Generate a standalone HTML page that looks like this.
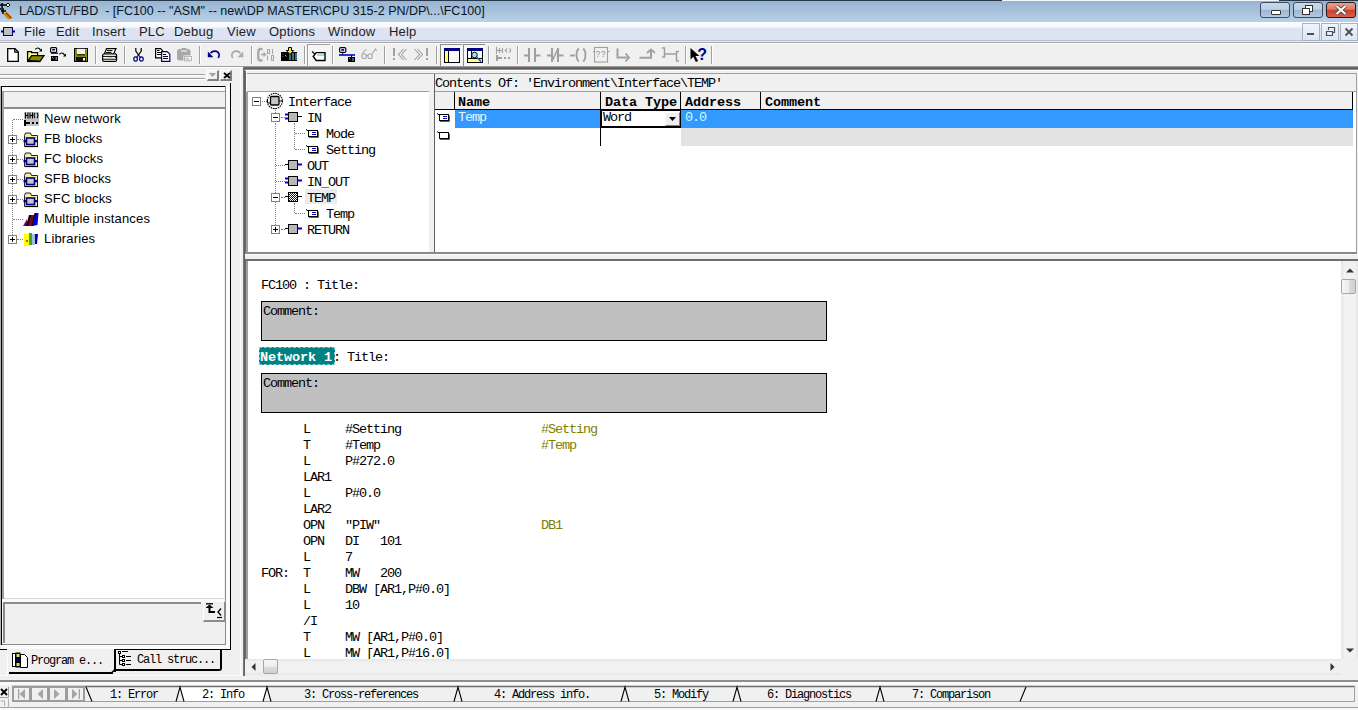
<!DOCTYPE html>
<html><head><meta charset="utf-8">
<style>
*{margin:0;padding:0;box-sizing:border-box}
html,body{width:1358px;height:710px;overflow:hidden;background:#f0f0f0;font-family:"Liberation Sans",sans-serif;font-size:12px;color:#000;position:relative}
.a{position:absolute}
svg{position:absolute;overflow:visible}
.m{margin-top:2px;font-family:"Liberation Mono",monospace;font-size:13.5px;letter-spacing:-1.1px;white-space:pre;line-height:16px;position:absolute}
.mb{margin-top:2px;font-family:"Liberation Mono",monospace;font-size:13.5px;letter-spacing:-0.1px;font-weight:bold;white-space:pre;line-height:16px;position:absolute}
.t{white-space:pre;position:absolute}
.mn{position:absolute;top:24px;font-size:13px;letter-spacing:0.2px;white-space:pre;color:#1e1e1e}
.sep{position:absolute;top:46px;width:2px;height:18px;border-left:1px solid #a0a0a0;border-right:1px solid #fff}
.tb{position:absolute;width:30px;height:16px;border:1px solid #3c4d63;border-radius:3px}
.mdib{position:absolute;top:23px;width:18px;height:18px;border:1px solid #a9b3c4;background:linear-gradient(#f0f4fa,#dde6f3)}
.pl{position:absolute;left:8px;width:9px;height:9px;border:1px solid #808080;background:#fff}
.pl::before{content:"";position:absolute;left:1px;top:3px;width:5px;height:1px;background:#000}
.pl::after{content:"";position:absolute;left:3px;top:1px;width:1px;height:5px;background:#000}
.mi{position:absolute;width:9px;height:9px;border:1px solid #808080;background:#fff}
.mi::before{content:"";position:absolute;left:1px;top:3px;width:5px;height:1px;background:#000}
.pi{position:absolute;width:9px;height:9px;border:1px solid #808080;background:#fff}
.pi::before{content:"";position:absolute;left:1px;top:3px;width:5px;height:1px;background:#000}
.pi::after{content:"";position:absolute;left:3px;top:1px;width:1px;height:5px;background:#000}
.tr{position:absolute;left:44px;font-size:13px;letter-spacing:0.15px;white-space:pre;color:#000}
.nb{position:absolute;top:686px;width:18px;height:16px;border:1px solid;border-color:#fff #808080 #808080 #fff;background:#f0f0f0}
.st{position:absolute;top:687px;font-family:"Liberation Mono",monospace;font-size:12px;letter-spacing:-1.2px;line-height:16px;white-space:pre}
</style></head><body>
<!-- title bar -->
<div class="a" style="left:0;top:0;width:1358px;height:22px;background:linear-gradient(#97b2cf,#b8d1e9)"></div>
<div class="a" style="left:0;top:0;width:1358px;height:1px;background:#27374a"></div><div class="a" style="left:1002px;top:0;width:277px;height:1px;background:#f4f6f8"></div>
<svg style="left:0;top:2px" width="14" height="17" viewBox="0 0 14 17">
 <path d="M0 3h8M2 1v5M0 7h4M1 9h5M3 8v4" stroke="#000" stroke-width="1.5"/>
 <path d="M8 1l2 2-2 2-2-2z" fill="#fff" stroke="#000" stroke-width="1"/>
 <path d="M5 11l6 6M6 10l6 6M4 12l5 5" stroke="#d08000" stroke-width="1.4"/>
 <path d="M6 11l5 5" stroke="#900" stroke-width="1"/>
</svg>
<div class="t" style="left:19px;top:4px;font-size:12.5px;color:#0a1420">LAD/STL/FBD  - [FC100 -- "ASM" -- new\DP MASTER\CPU 315-2 PN/DP\...\FC100]</div>
<!-- title buttons -->
<div class="tb" style="left:1260px;top:2px;background:linear-gradient(#c9d9ec 0,#bdd0e6 45%,#9fb6d2 50%,#b4c9e2 100%)"></div>
<div class="a" style="left:1271px;top:10px;width:10px;height:5px;background:#fff;border:1px solid #333;border-radius:1px"></div>
<div class="tb" style="left:1293px;top:2px;background:linear-gradient(#c9d9ec 0,#bdd0e6 45%,#9fb6d2 50%,#b4c9e2 100%)"></div>
<div class="a" style="left:1305px;top:5px;width:8px;height:7px;background:#fff;border:1px solid #333"></div>
<div class="a" style="left:1302px;top:8px;width:8px;height:7px;background:#fff;border:1px solid #333"></div>
<div class="tb" style="left:1326px;top:2px;border-color:#2a1a1a;background:linear-gradient(#e8a090 0,#de7a66 45%,#c9402a 50%,#d86048 100%)"></div>
<svg style="left:1335px;top:5px" width="12" height="10" viewBox="0 0 12 10"><path d="M1.5 1l9 8M10.5 1l-9 8" stroke="#333" stroke-width="3.6"/><path d="M1.5 1l9 8M10.5 1l-9 8" stroke="#fff" stroke-width="2.2"/></svg>

<!-- menu bar -->
<div class="a" style="left:0;top:22px;width:1358px;height:20px;background:linear-gradient(#fdfdfe 0,#f7f8fc 25%,#dfe4f3 32%,#dce2f2 100%)"></div>
<div class="a" style="left:0;top:40px;width:1358px;height:1px;background:#babfcc"></div><div class="a" style="left:0;top:41px;width:1358px;height:1px;background:#e9edf5"></div><div class="a" style="left:0;top:42px;width:1358px;height:1px;background:#a2a3a8"></div>
<div class="a" style="left:0;top:43px;width:1358px;height:1px;background:#ffffff"></div>
<svg style="left:1px;top:27px" width="14" height="9" viewBox="0 0 14 9"><rect x="2.5" y="0.5" width="9" height="8" fill="#bfbfbf" stroke="#000080"/><path d="M0 4.5h2.5M11.5 4.5H14" stroke="#000080" stroke-width="2"/></svg>
<div class="mn" style="left:24px">File</div>
<div class="mn" style="left:56px">Edit</div>
<div class="mn" style="left:92px">Insert</div>
<div class="mn" style="left:139px">PLC</div>
<div class="mn" style="left:174px">Debug</div>
<div class="mn" style="left:227px">View</div>
<div class="mn" style="left:269px">Options</div>
<div class="mn" style="left:328px">Window</div>
<div class="mn" style="left:389px">Help</div>
<div class="mdib" style="left:1302px"></div>
<div class="a" style="left:1307px;top:33px;width:7px;height:2px;background:#4a4f58"></div>
<div class="mdib" style="left:1321px"></div>
<svg style="left:1326px;top:27px" width="9" height="9" viewBox="0 0 9 9"><path d="M0.5 4.5h6v4h-6zM2.5 3V0.5h6v5H7" fill="none" stroke="#4a4f58" stroke-width="1.2"/></svg>
<div class="mdib" style="left:1340px"></div>
<svg style="left:1345px;top:28px" width="8" height="8" viewBox="0 0 8 8"><path d="M0.5 0.5l7 7M7.5 0.5l-7 7" stroke="#4a4f58" stroke-width="1.8"/></svg>
<!-- toolbar -->
<svg style="left:7px;top:48px" width="12" height="14" viewBox="0 0 12 14"><path d="M0.7 0.7h7.3l3.3 3.3v9.3h-10.6z" fill="#fff" stroke="#000" stroke-width="1.3"/><path d="M7.8 0.8v3.4h3.4" fill="none" stroke="#000" stroke-width="1.2"/></svg>
<svg style="left:24px;top:44px" width="22" height="20" viewBox="0 0 22 20"><path d="M3.6 17.4V7.6h4v1h6v3" fill="#ffff80" stroke="#000" stroke-width="1.3"/><path d="M4.2 16.5l3.5-4.8h12.2l-4 5.8z" fill="#8a8a00" stroke="#000" stroke-width="1.3"/><path d="M3 17.4h12" stroke="#000" stroke-width="1.4"/><path d="M11.3 5.3c1.5-1.8 3.6-1.8 5.2 0.6" fill="none" stroke="#000" stroke-width="1.2"/><path d="M15 7.4h3v-3z" fill="#000"/></svg>
<svg style="left:48px;top:44px" width="22" height="20" viewBox="0 0 22 20"><rect x="2.6" y="3.6" width="6" height="4.8" rx="1" fill="#fff" stroke="#000" stroke-width="1.2"/><rect x="4" y="5" width="3.2" height="1.6" rx="0.6" fill="#000080"/><path d="M3 9.2h7" stroke="#000" stroke-width="1.2"/><rect x="3" y="12" width="7" height="5" fill="#000"/><path d="M4.2 13.2l1.4 1.4M8.2 13v3" stroke="#70d0e0" stroke-width="1"/><path d="M11.3 10.3c1.5-1.8 3.6-1.8 5.2 0.6" fill="none" stroke="#000" stroke-width="1.2"/><path d="M15 12.4h3v-3z" fill="#000"/></svg>
<svg style="left:74px;top:48px" width="14" height="14" viewBox="0 0 14 14"><rect x="0" y="0" width="14" height="14" rx="0.5" fill="#000"/><rect x="1" y="1" width="12" height="12" fill="#8a8a10"/><rect x="3" y="0.8" width="8" height="5.4" fill="#f0f0f0"/><path d="M3 6.8h8" stroke="#000" stroke-width="1"/><rect x="2" y="9" width="10" height="4.2" fill="#101010"/><rect x="9" y="10" width="2" height="2.5" fill="#fff"/><rect x="12.2" y="1" width="0.8" height="0.8" fill="#fff"/></svg>
<div class="sep" style="left:95px"></div>
<svg style="left:102px;top:48px" width="16" height="14" viewBox="0 0 16 14"><path d="M4.6 0.6h9.4l-2.6 5.6h-9.2z" fill="#fff" stroke="#000" stroke-width="1.2"/><path d="M5 2.6h5.5M4 4.4h5.5" stroke="#000" stroke-width="1"/><rect x="0.6" y="6" width="14" height="7.4" rx="1.5" fill="#fff" stroke="#000" stroke-width="1.2"/><path d="M0.8 8.4h14M1 11.2h13.6" stroke="#000" stroke-width="1"/><path d="M5.5 9.8h5" stroke="#c8e040" stroke-width="1.2"/><path d="M13 5l2 2-2 2 2 2" fill="none" stroke="#000" stroke-width="0.8"/></svg>
<div class="sep" style="left:124px"></div>
<svg style="left:133px;top:48px" width="11" height="14" viewBox="0 0 11 14"><path d="M2.8 0v3l2.7 4M8.2 0v3l-2.7 4" fill="none" stroke="#000" stroke-width="1.2"/><path d="M5.5 7l-2 2.5M5.5 7l2 2.5" stroke="#000080" stroke-width="1.2"/><ellipse cx="2.6" cy="11" rx="1.8" ry="2.2" fill="none" stroke="#000080" stroke-width="1.2"/><ellipse cx="8.4" cy="11" rx="1.8" ry="2.2" fill="none" stroke="#000080" stroke-width="1.2"/></svg>
<svg style="left:155px;top:48px" width="16" height="14" viewBox="0 0 16 14"><path d="M0.6 0.6h5l1.8 1.8v7.4h-6.8z" fill="#fff" stroke="#000" stroke-width="1.2"/><path d="M2 2.5h2.5M2 4.5h4M2 6.5h4" stroke="#000" stroke-width="1"/><path d="M6.6 3.6h5.6l2.6 2.6v7.2h-8.2z" fill="#fff" stroke="#000080" stroke-width="1.2"/><path d="M8 6.5h3M8 8.5h5M8 10.5h5" stroke="#000" stroke-width="1"/></svg>
<svg style="left:177px;top:48px" width="16" height="14" viewBox="0 0 16 14"><rect x="0" y="1" width="13.5" height="11.5" rx="2.5" fill="#a8a8a8"/><rect x="4.5" y="0" width="5" height="2" fill="#a8a8a8"/><path d="M4 3h6" stroke="#fff" stroke-width="1"/><rect x="6.5" y="7.5" width="9" height="6.5" fill="#fff"/><rect x="7.5" y="8.5" width="7" height="4.5" fill="#f4f4f4" stroke="#a8a8a8" stroke-width="0.8"/><path d="M8.5 10.5h3M8.5 12h5" stroke="#a8a8a8" stroke-width="0.8"/></svg>
<div class="sep" style="left:199px"></div>
<svg style="left:207px;top:50px" width="14" height="9" viewBox="0 0 14 9"><path d="M3.5 3.2c2-2.6 7.2-3 8.5 0.8 0.5 1.5 0 3-0.8 4" fill="none" stroke="#000080" stroke-width="1.7"/><path d="M0.8 1.6v5.6h5.6z" fill="#000080"/></svg>
<svg style="left:230px;top:50px" width="14" height="9" viewBox="0 0 14 9"><path d="M10.5 3.2c-2-2.6-7.2-3-8.5 0.8-0.5 1.5 0 3 0.8 4" fill="none" stroke="#a8a8a8" stroke-width="1.7"/><path d="M13.2 1.6v5.6h-5.6z" fill="#a8a8a8"/></svg>
<div class="sep" style="left:251px"></div>
<svg style="left:257px;top:48px" width="18" height="14" viewBox="0 0 18 14"><path d="M5.5 1h-2c-1.5 0-2.2 1-2.2 2.5v6.5c0 1.5 0.7 2.5 2.2 2.5h2" fill="none" stroke="#a8a8a8" stroke-width="2.4"/><path d="M4 6.5h4M6.5 4.5l2 2-2 2" fill="none" stroke="#a8a8a8" stroke-width="1.3"/><path d="M10.5 1.5h2v4h-2zM15.5 1v5M10.5 7.5v5M14.5 7.5h2v5h-2z" fill="none" stroke="#a8a8a8" stroke-width="1.1"/></svg>
<svg style="left:281px;top:47px" width="17" height="15" viewBox="0 0 17 15"><rect x="0" y="5" width="16" height="9" fill="#000"/><path d="M12 6v7M15 6v7" stroke="#60c8d8" stroke-width="1.2"/><path d="M2 6.5v1M2 9v1" stroke="#d04040" stroke-width="1"/><path d="M4 8l1.5 1.5" stroke="#60c8d8" stroke-width="1"/><path d="M9 7v6" stroke="#60c8d8" stroke-width="1.2"/><path d="M7.5 0.5h3v3h2.2l-3.7 4-3.7-4h2.2z" fill="#f0e040" stroke="#000" stroke-width="1"/></svg>
<div class="sep" style="left:304px"></div>
<div class="a" style="left:307px;top:44px;width:23px;height:22px;border-top:1px solid #a0a0a0;border-left:1px solid #a0a0a0;background:repeating-conic-gradient(#fafafa 0 25%,#f0f0f0 0 50%) 0 0/2px 2px"></div>
<svg style="left:311px;top:51px" width="16" height="11" viewBox="0 0 16 11"><path d="M1 0.5l4 3.5" stroke="#000" stroke-width="1.1"/><path d="M14 1.6H5.2L2.2 5.5l3 4H14z" fill="#fff" stroke="#000" stroke-width="1.4"/><path d="M6 4h7" stroke="#50d0d0" stroke-width="1.2"/></svg>
<div class="sep" style="left:332px"></div>
<svg style="left:338px;top:47px" width="18" height="16" viewBox="0 0 18 16"><rect x="1.6" y="0.6" width="6.2" height="4.8" rx="1.2" fill="#fff" stroke="#000" stroke-width="1.2"/><rect x="3.2" y="2" width="3" height="1.8" rx="0.6" fill="#000080"/><path d="M4.7 5.5v2" stroke="#000" stroke-width="1"/><path d="M1 8h16" stroke="#0000e0" stroke-width="1.6"/><path d="M13.5 8.5v1.5" stroke="#000" stroke-width="1"/><rect x="10" y="10" width="7" height="5" fill="#000"/><path d="M11.3 11.2l1.2 1.2M15 11v3" stroke="#60c8d8" stroke-width="1"/></svg>
<svg style="left:361px;top:48px" width="17" height="12" viewBox="0 0 17 12"><rect x="1" y="6" width="4" height="4.5" rx="1.2" fill="none" stroke="#a8a8a8" stroke-width="1.2"/><rect x="7" y="6" width="4" height="4.5" rx="1.2" fill="none" stroke="#a8a8a8" stroke-width="1.2"/><path d="M5 7.5h2M1.2 6l3-4h1.5M11 6l3.5-5 1 2" fill="none" stroke="#a8a8a8" stroke-width="1.1"/></svg>
<div class="sep" style="left:384px"></div>
<svg style="left:392px;top:48px" width="16" height="13" viewBox="0 0 16 13"><rect x="1" y="0" width="2" height="8" fill="#a0a0a0"/><rect x="1" y="10" width="2" height="2" fill="#a0a0a0"/><path d="M11.5 1L6.5 6.5l5 5.5M14.5 1L9.5 6.5l5 5.5" fill="none" stroke="#a0a0a0" stroke-width="1.1"/></svg>
<svg style="left:412px;top:48px" width="17" height="13" viewBox="0 0 17 13"><rect x="14" y="0" width="2" height="8" fill="#a0a0a0"/><rect x="14" y="10" width="2" height="2" fill="#a0a0a0"/><path d="M2.5 1l5 5.5-5 5.5M5.5 1l5 5.5-5 5.5" fill="none" stroke="#a0a0a0" stroke-width="1.1"/></svg>
<div class="sep" style="left:436px"></div>
<div class="a" style="left:440px;top:44px;width:22px;height:22px;border-top:1px solid #8c8c8c;border-left:1px solid #8c8c8c;background:repeating-conic-gradient(#fdfdfd 0 25%,#f0f0f0 0 50%) 0 0/2px 2px"></div>
<svg style="left:444px;top:48px" width="16" height="15" viewBox="0 0 16 15"><rect x="0.5" y="0.5" width="15" height="14" fill="#fafafa" stroke="#000"/><rect x="0" y="0" width="16" height="3" fill="#000080"/><rect x="1" y="3" width="3" height="11" fill="#ffff80"/><path d="M4.5 3v11" stroke="#000"/></svg>
<div class="a" style="left:463px;top:44px;width:22px;height:22px;border-top:1px solid #8c8c8c;border-left:1px solid #8c8c8c;background:repeating-conic-gradient(#fdfdfd 0 25%,#f0f0f0 0 50%) 0 0/2px 2px"></div>
<svg style="left:467px;top:48px" width="16" height="15" viewBox="0 0 16 15"><rect x="0.5" y="0.5" width="15" height="14" fill="#fafafa" stroke="#000"/><rect x="0" y="0" width="16" height="3" fill="#000080"/><rect x="1" y="11" width="14" height="3" fill="#ffff80"/><path d="M1 10.5h14M4.5 3v7.5" stroke="#000"/><circle cx="7.5" cy="7" r="2.8" fill="#90e8f0" stroke="#000" stroke-width="0.9"/><path d="M9.5 9l4.5 4.5" stroke="#2050c0" stroke-width="1.6"/></svg>
<div class="sep" style="left:488px"></div>
<svg style="left:496px;top:47px" width="16" height="15" viewBox="0 0 16 15"><path d="M0.5 0v7M3.5 1v5M0.5 3.5h5.5M6.5 1v5M8.5 3.5h1.5M11 1.5c-1.3 1-1.3 3 0 4M13.5 1.5c1.3 1 1.3 3 0 4" fill="none" stroke="#a0a0a0" stroke-width="1.1"/><rect x="0" y="8" width="2" height="6" fill="#a0a0a0"/><rect x="2" y="10" width="4" height="2" fill="#a0a0a0"/><rect x="8" y="10" width="2" height="2" fill="#a0a0a0"/><rect x="12" y="10" width="2" height="2" fill="#a0a0a0"/></svg>
<div class="sep" style="left:517px"></div>
<svg style="left:524px;top:48px" width="17" height="15" viewBox="0 0 17 15"><path d="M0 7.5h5M11 7.5h5.5" stroke="#a0a0a0" stroke-width="2"/><rect x="4" y="0" width="2" height="14" fill="#a0a0a0"/><rect x="10" y="0" width="2" height="14" fill="#a0a0a0"/></svg>
<svg style="left:547px;top:48px" width="17" height="15" viewBox="0 0 17 15"><path d="M0 7.5h5M11 7.5h5.5" stroke="#a0a0a0" stroke-width="2"/><rect x="4" y="0" width="2" height="14" fill="#a0a0a0"/><rect x="10" y="0" width="2" height="14" fill="#a0a0a0"/><path d="M5 13.5L11 0.5" stroke="#a0a0a0" stroke-width="1.6"/></svg>
<svg style="left:570px;top:48px" width="17" height="15" viewBox="0 0 17 15"><path d="M0 7.5h5" stroke="#a0a0a0" stroke-width="2"/><path d="M8.8 0.5c-3 2.5-3 10.5 0 13M13.2 0.5c3 2.5 3 10.5 0 13" fill="none" stroke="#a0a0a0" stroke-width="1.8"/></svg>
<svg style="left:593px;top:47px" width="17" height="16" viewBox="0 0 17 16"><rect x="1.5" y="0.5" width="13" height="14.5" fill="none" stroke="#a0a0a0" stroke-width="1.1"/><path d="M0 4.5h1.5M14.5 4.5H17" stroke="#a0a0a0" stroke-width="1"/><text x="2.6" y="10" font-family="Liberation Mono" font-size="8.5" fill="#909090">??</text></svg>
<svg style="left:616px;top:48px" width="15" height="14" viewBox="0 0 15 14"><path d="M1.5 0.5v9h10" fill="none" stroke="#a0a0a0" stroke-width="2"/><path d="M9.5 5.5l3.5 4-3.5 4" fill="none" stroke="#a0a0a0" stroke-width="1.8"/></svg>
<svg style="left:639px;top:48px" width="17" height="12" viewBox="0 0 17 12"><path d="M0.5 9.8h11.5V2" fill="none" stroke="#a0a0a0" stroke-width="2"/><path d="M8 5l4-3.5 4 3.5" fill="none" stroke="#a0a0a0" stroke-width="1.8"/></svg>
<svg style="left:661px;top:47px" width="19" height="15" viewBox="0 0 19 15"><path d="M1 1h2.5v9H1M3.5 7h12.5M18 4.5h-2.5v9.5H18" fill="none" stroke="#a0a0a0" stroke-width="1.5"/></svg>
<div class="sep" style="left:685px"></div>
<svg style="left:690px;top:47px" width="18" height="16" viewBox="0 0 18 16"><path d="M0.5 1v11.5l2.8-2.8 2.6 5.3 2.2-1.1-2.6-5h4z" fill="#000"/><text x="7.2" y="13" font-family="Liberation Sans" font-weight="bold" font-size="16" fill="#000080">?</text></svg>
<div class="sep" style="left:711px"></div>
<!-- toolbar bottom -->
<div class="a" style="left:0;top:66px;width:244px;height:1px;background:#a0a0a0"></div>
<div class="a" style="left:0;top:67px;width:244px;height:1px;background:#fff"></div>
<!-- left dock -->
<div class="a" style="left:0;top:74px;width:205px;height:1px;background:#a0a0a0"></div>
<div class="a" style="left:0;top:75px;width:205px;height:1px;background:#fff"></div>
<div class="a" style="left:0;top:78px;width:205px;height:1px;background:#a0a0a0"></div>
<div class="a" style="left:0;top:79px;width:205px;height:1px;background:#fff"></div>
<div class="a" style="left:207px;top:70px;width:12px;height:11px;border:1px solid;border-color:#fff #808080 #808080 #fff;border-right-width:2px;border-bottom-width:2px;background:#f0f0f0"></div>
<svg style="left:209px;top:73px" width="8" height="4" viewBox="0 0 8 4"><path d="M0 0h7l-3.5 4z" fill="#a0a0a0"/></svg>
<div class="a" style="left:220px;top:70px;width:12px;height:11px;border:1px solid;border-color:#fff #808080 #808080 #fff;border-right-width:2px;border-bottom-width:2px;background:#f0f0f0"></div>
<svg style="left:223px;top:72px" width="8" height="7" viewBox="0 0 8 7"><path d="M1 1l6 5M7 1l-6 5" stroke="#000" stroke-width="1.8"/></svg>

<div class="a" style="left:1px;top:86px;width:225px;height:1px;background:#000"></div>
<div class="a" style="left:1px;top:86px;width:1px;height:559px;background:#000"></div>
<div class="a" style="left:0;top:86px;width:1px;height:559px;background:#b4b4b4"></div>
<div class="a" style="left:2px;top:87px;width:223px;height:4px;background:#fafafa"></div>
<div class="a" style="left:2px;top:91px;width:223px;height:1px;background:#a0a0a0"></div>
<div class="a" style="left:2px;top:107px;width:223px;height:2px;background:#8c8c8c"></div>
<div class="a" style="left:2px;top:91px;width:2px;height:508px;background:#a0a0a0"></div>
<div class="a" style="left:225px;top:86px;width:1px;height:559px;background:#8c8c8c"></div>
<div class="a" style="left:226px;top:86px;width:4px;height:563px;background:#fafafa"></div>
<div class="a" style="left:230px;top:83px;width:1px;height:567px;background:#000"></div>
<div class="a" style="left:4px;top:109px;width:220px;height:489px;background:#fff"></div>
<div class="a" style="left:4px;top:598px;width:221px;height:1px;background:#d8d8d8"></div>
<div class="a" style="left:2px;top:599px;width:223px;height:3px;background:#fafafa"></div>
<!-- tree lines -->
<div class="a" style="left:12px;top:120px;width:0;height:119px;border-left:1px dotted #808080"></div>
<div class="a" style="left:13px;top:119px;width:10px;border-top:1px dotted #808080"></div>
<div class="a" style="left:17px;top:139px;width:6px;border-top:1px dotted #808080"></div>
<div class="a" style="left:17px;top:159px;width:6px;border-top:1px dotted #808080"></div>
<div class="a" style="left:17px;top:179px;width:6px;border-top:1px dotted #808080"></div>
<div class="a" style="left:17px;top:199px;width:6px;border-top:1px dotted #808080"></div>
<div class="a" style="left:13px;top:219px;width:10px;border-top:1px dotted #808080"></div>
<div class="a" style="left:17px;top:239px;width:6px;border-top:1px dotted #808080"></div>
<!-- plus boxes -->
<div class="pl" style="top:135px"></div>
<div class="pl" style="top:155px"></div>
<div class="pl" style="top:175px"></div>
<div class="pl" style="top:195px"></div>
<div class="pl" style="top:235px"></div>
<!-- icons -->
<svg style="left:24px;top:112px" width="15" height="14" viewBox="0 0 15 14"><rect x="0" y="0" width="15" height="14" fill="#c4c4c4"/><path d="M1.5 0.5v6M4 0.5v6M1.5 3.5h2.5M6 0.5v6M8.5 0.5v6M6 3.5h2.5M11 1c-1.2 1-1.2 4 0 5M13 1c1.2 1 1.2 4 0 5" fill="none" stroke="#000" stroke-width="1.1"/><rect x="0" y="8" width="2" height="6" fill="#000"/><rect x="2" y="10" width="4" height="2" fill="#000"/><rect x="8" y="10" width="2" height="2" fill="#000"/><rect x="12" y="10" width="2" height="2" fill="#000"/></svg>
<svg class="fi" style="left:23px;top:132px" width="16" height="15" viewBox="0 0 16 15"><path d="M1.5 3.5l1-2.5h5l1 2.5h6v11h-13z" fill="#f0f0a0" stroke="#202020"/><rect x="3.5" y="6" width="8" height="6.5" fill="#c8c8c8" stroke="#000080" stroke-width="1.6"/><path d="M0.5 9.2h3M11.5 9.2h3.5" stroke="#000080" stroke-width="2.2"/><path d="M2 14.5h13" stroke="#000" stroke-width="1.2"/></svg>
<svg class="fi" style="left:23px;top:152px" width="16" height="15" viewBox="0 0 16 15"><path d="M1.5 3.5l1-2.5h5l1 2.5h6v11h-13z" fill="#f0f0a0" stroke="#202020"/><rect x="3.5" y="6" width="8" height="6.5" fill="#c8c8c8" stroke="#000080" stroke-width="1.6"/><path d="M0.5 9.2h3M11.5 9.2h3.5" stroke="#000080" stroke-width="2.2"/><path d="M2 14.5h13" stroke="#000" stroke-width="1.2"/></svg>
<svg class="fi" style="left:23px;top:172px" width="16" height="15" viewBox="0 0 16 15"><path d="M1.5 3.5l1-2.5h5l1 2.5h6v11h-13z" fill="#f0f0a0" stroke="#202020"/><rect x="3.5" y="6" width="8" height="6.5" fill="#c8c8c8" stroke="#000080" stroke-width="1.6"/><path d="M0.5 9.2h3M11.5 9.2h3.5" stroke="#000080" stroke-width="2.2"/><path d="M2 14.5h13" stroke="#000" stroke-width="1.2"/></svg>
<svg class="fi" style="left:23px;top:192px" width="16" height="15" viewBox="0 0 16 15"><path d="M1.5 3.5l1-2.5h5l1 2.5h6v11h-13z" fill="#f0f0a0" stroke="#202020"/><rect x="3.5" y="6" width="8" height="6.5" fill="#c8c8c8" stroke="#000080" stroke-width="1.6"/><path d="M0.5 9.2h3M11.5 9.2h3.5" stroke="#000080" stroke-width="2.2"/><path d="M2 14.5h13" stroke="#000" stroke-width="1.2"/></svg>
<svg style="left:23px;top:212px" width="16" height="14" viewBox="0 0 16 14"><path d="M0 14l4-7v7z" fill="#800080"/><path d="M3 14l3-11h2v11z" fill="#000"/><path d="M5 14l3-11h3v11z" fill="#800020"/><path d="M9 14l3-13h3.5l-1 12z" fill="#0000e0"/><path d="M9 14l3-13" stroke="#000" stroke-width="1"/></svg>
<svg style="left:24px;top:232px" width="15" height="14" viewBox="0 0 15 14"><rect x="0" y="2" width="5" height="12" fill="#ffff00"/><rect x="5" y="1" width="3" height="12" fill="#40a040"/><rect x="8" y="2" width="3" height="11" fill="#a0c0e0"/><path d="M11 2h3l-1 10h-2z" fill="#0000a0"/><path d="M2 9h2" stroke="#000"/></svg>
<div class="tr" style="top:111px">New network</div>
<div class="tr" style="top:131px">FB blocks</div>
<div class="tr" style="top:151px">FC blocks</div>
<div class="tr" style="top:171px">SFB blocks</div>
<div class="tr" style="top:191px">SFC blocks</div>
<div class="tr" style="top:211px">Multiple instances</div>
<div class="tr" style="top:231px">Libraries</div>
<!-- bottom box -->
<div class="a" style="left:3px;top:602px;width:198px;height:41px;border-top:2px solid #8c8c8c;border-left:2px solid #8c8c8c;background:#f0f0f0"></div>
<div class="a" style="left:203px;top:601px;width:23px;height:21px;border:1px solid;border-color:#fff #8c8c8c #8c8c8c #fff;border-right-width:2px;border-bottom-width:2px;background:#f0f0f0"></div>
<svg style="left:205px;top:603px" width="18" height="16" viewBox="0 0 18 16"><path d="M1 0.8h7" stroke="#000" stroke-width="1.3"/><path d="M0.5 5l4-3.5 4 3.5z" fill="#000"/><path d="M4.5 4v5h5.5" fill="none" stroke="#000" stroke-width="2"/><path d="M16 5.5l-3 3.5 3 3.5" fill="none" stroke="#000" stroke-width="1.3"/><path d="M12 14.5h5" stroke="#000" stroke-width="1.2"/></svg>
<div class="a" style="left:2px;top:644px;width:224px;height:1px;background:#8c8c8c"></div>
<div class="a" style="left:2px;top:645px;width:228px;height:4px;background:#fafafa"></div>
<div class="a" style="left:0;top:649px;width:7px;height:1px;background:#000"></div>
<div class="a" style="left:115px;top:649px;width:116px;height:1px;background:#000"></div>
<!-- tabs -->
<div class="a" style="left:7px;top:649px;width:108px;height:25px;background:#f0f0f0;border-left:1px solid #fff"></div>
<div class="a" style="left:9px;top:672px;width:104px;height:2px;background:#000"></div>
<div class="a" style="left:115px;top:650px;width:107px;height:21px;background:#f0f0f0;border-right:2px solid #000;border-bottom:2px solid #000;border-bottom-right-radius:3px"></div>
<div class="a" style="left:114px;top:649px;width:2px;height:23px;background:#000"></div>
<svg style="left:111px;top:669px" width="5" height="5" viewBox="0 0 5 5"><path d="M0 4.5L4 0.5" stroke="#000" stroke-width="1.6"/></svg>
<svg style="left:12px;top:652px" width="18" height="16" viewBox="0 0 18 16"><rect x="0.5" y="1.5" width="3" height="13" fill="#fff" stroke="#000"/><rect x="3.5" y="0.5" width="5" height="15" fill="#000"/><rect x="4.5" y="2" width="3" height="3" fill="#e0e060"/><rect x="4.5" y="6.5" width="3" height="3" fill="#000080"/><rect x="4.5" y="11" width="3" height="3" fill="#e0e060"/><path d="M8.5 2.5h4l3 3v10h-7z" fill="#fff" stroke="#000"/></svg>
<div class="st" style="left:31px;top:653px">Program e...</div>
<svg style="left:118px;top:650px" width="18" height="17" viewBox="0 0 18 17"><rect x="0.5" y="1.5" width="2" height="2" fill="#fff" stroke="#000"/><rect x="4.5" y="5.5" width="2" height="2" fill="#fff" stroke="#000"/><rect x="4.5" y="9.5" width="2" height="2" fill="#fff" stroke="#000"/><rect x="4.5" y="13.5" width="2" height="2" fill="#fff" stroke="#000"/><path d="M1.5 4v10.5h3M1.5 6.5h3M1.5 10.5h3M4 1.5h6M8 6.5h5M8 10.5h5M8 14.5h5" fill="none" stroke="#000"/></svg>
<div class="st" style="left:137px;top:652px">Call struc...</div>
<div class="a" style="left:231px;top:83px;width:12px;height:593px;background:#f0f0f0"></div>
<div class="a" style="left:240px;top:69px;width:1px;height:607px;background:#fbfbfb"></div>
<div class="a" style="left:0;top:675px;width:245px;height:1px;background:#fafafa"></div>
<!-- MDI client -->
<div class="a" style="left:244px;top:66px;width:1114px;height:1px;background:#9a9a9a"></div>
<div class="a" style="left:243px;top:67px;width:1115px;height:1px;background:#6a6a6a"></div><div class="a" style="left:243px;top:68px;width:1115px;height:1px;background:#5a5a5a"></div><div class="a" style="left:245px;top:69px;width:1113px;height:1px;background:#8e8e8e"></div>
<div class="a" style="left:243px;top:67px;width:3px;height:609px;background:linear-gradient(90deg,#8a8a8a,#5e5e5e 40%,#6e6e6e)"></div>
<div class="a" style="left:245px;top:70px;width:1113px;height:1px;background:#fff"></div><div class="a" style="left:246px;top:71px;width:1112px;height:2px;background:#f0f0f0"></div>
<!-- top pane outer -->
<div class="a" style="left:246px;top:73px;width:1111px;height:1px;background:#a0a0a0"></div>
<div class="a" style="left:246px;top:70px;width:1px;height:21px;background:#fbfbfb"></div>
<div class="a" style="left:1356px;top:73px;width:1px;height:181px;background:#a0a0a0"></div>
<div class="a" style="left:245px;top:252px;width:1112px;height:2px;background:#8a8a8a"></div><div class="a" style="left:245px;top:254px;width:1113px;height:5px;background:#f0f0f0"></div><div class="a" style="left:245px;top:254px;width:1113px;height:1px;background:#fbfbfb"></div>
<!-- interface tree -->
<div class="a" style="left:247px;top:91px;width:182px;height:1px;background:#a0a0a0"></div>
<div class="a" style="left:246px;top:92px;width:183px;height:160px;background:#fff;border-left:2px solid #a0a0a0"></div>
<div class="a" style="left:434px;top:74px;width:1px;height:178px;background:#606060"></div>
<div class="a" style="left:435px;top:91px;width:921px;height:1px;background:#a0a0a0"></div>
<div class="a" style="left:435px;top:92px;width:921px;height:160px;background:#fff"></div>
<!-- tree lines -->
<div class="a" style="left:262px;top:101px;width:5px;border-top:1px dotted #808080"></div>
<div class="a" style="left:275px;top:108px;height:5px;border-left:1px dotted #808080"></div>
<div class="a" style="left:275px;top:123px;height:102px;border-left:1px dotted #808080"></div>
<div class="a" style="left:281px;top:117px;width:4px;border-top:1px dotted #808080"></div>
<div class="a" style="left:276px;top:165px;width:9px;border-top:1px dotted #808080"></div>
<div class="a" style="left:276px;top:181px;width:9px;border-top:1px dotted #808080"></div>
<div class="a" style="left:281px;top:197px;width:4px;border-top:1px dotted #808080"></div>
<div class="a" style="left:281px;top:229px;width:4px;border-top:1px dotted #808080"></div>
<div class="a" style="left:294px;top:123px;height:26px;border-left:1px dotted #808080"></div>
<div class="a" style="left:295px;top:133px;width:10px;border-top:1px dotted #808080"></div>
<div class="a" style="left:295px;top:149px;width:10px;border-top:1px dotted #808080"></div>
<div class="a" style="left:294px;top:203px;height:10px;border-left:1px dotted #808080"></div>
<div class="a" style="left:295px;top:213px;width:10px;border-top:1px dotted #808080"></div>
<div class="mi" style="left:252px;top:97px"></div>
<div class="mi" style="left:271px;top:113px"></div>
<div class="mi" style="left:271px;top:193px"></div>
<div class="pi" style="left:271px;top:225px"></div>
<div class="a" style="left:305px;top:189px;width:32px;height:15px;background:#ececec"></div>
<svg style="left:266px;top:92px" width="18" height="18" viewBox="0 0 18 18"><circle cx="8.8" cy="9" r="7.6" fill="none" stroke="#000" stroke-width="1.1" stroke-dasharray="1.6 0.8"/><rect x="4.5" y="4.5" width="8.5" height="8.5" rx="1" fill="#c4c4c4" stroke="#000" stroke-width="1.3"/><path d="M1.5 7v4h3M13 9h4" fill="none" stroke="#000" stroke-width="1"/></svg>
<svg class="bi" style="left:285px;top:112px" width="17" height="10" viewBox="0 0 17 10"><path d="M0 2.5h4M0 6.5h4" stroke="#0000e0" stroke-width="2"/><rect x="3.5" y="0.5" width="9" height="9" fill="#b8b8b8" stroke="#000"/><path d="M12.5 4.5H17" stroke="#000"/></svg>
<svg style="left:306px;top:129px" width="13" height="9" viewBox="0 0 13 9"><path d="M0 0.5l3 2" stroke="#000"/><rect x="2.5" y="1.5" width="9" height="6" fill="#fff" stroke="#000"/><path d="M6 3.5h4M6 5.5h4" stroke="#0000c0"/><path d="M3 8.5h9.5v-6" fill="none" stroke="#606060"/></svg>
<svg style="left:306px;top:145px" width="13" height="9" viewBox="0 0 13 9"><path d="M0 0.5l3 2" stroke="#000"/><rect x="2.5" y="1.5" width="9" height="6" fill="#fff" stroke="#000"/><path d="M6 3.5h4M6 5.5h4" stroke="#0000c0"/><path d="M3 8.5h9.5v-6" fill="none" stroke="#606060"/></svg>
<svg class="bi" style="left:285px;top:160px" width="17" height="10" viewBox="0 0 17 10"><path d="M0 4.5h4" stroke="#000"/><rect x="3.5" y="0.5" width="9" height="9" fill="#b8b8b8" stroke="#000"/><path d="M12 4.5H17" stroke="#0000e0" stroke-width="2"/></svg>
<svg class="bi" style="left:285px;top:176px" width="17" height="10" viewBox="0 0 17 10"><path d="M0 2.5h4M0 6.5h4" stroke="#0000e0" stroke-width="2"/><rect x="3.5" y="0.5" width="9" height="9" fill="#b8b8b8" stroke="#000"/><path d="M12 4.5H17" stroke="#0000e0" stroke-width="2"/></svg>
<svg class="bi" style="left:285px;top:192px" width="17" height="10" viewBox="0 0 17 10"><defs><pattern id="ck" width="2" height="2" patternUnits="userSpaceOnUse"><rect width="1" height="1" fill="#0000c0"/><rect x="1" y="1" width="1" height="1" fill="#0000c0"/><rect x="1" width="1" height="1" fill="#fff"/><rect y="1" width="1" height="1" fill="#fff"/></pattern></defs><path d="M0 4.5h4" stroke="#000"/><rect x="3.5" y="0.5" width="9" height="9" fill="url(#ck)" stroke="#000"/><path d="M12.5 4.5H17" stroke="#000"/></svg>
<svg style="left:306px;top:209px" width="13" height="9" viewBox="0 0 13 9"><path d="M0 0.5l3 2" stroke="#000"/><rect x="2.5" y="1.5" width="9" height="6" fill="#fff" stroke="#000"/><path d="M6 3.5h4M6 5.5h4" stroke="#0000c0"/><path d="M3 8.5h9.5v-6" fill="none" stroke="#606060"/></svg>
<svg class="bi" style="left:285px;top:224px" width="17" height="10" viewBox="0 0 17 10"><path d="M0 4.5h4" stroke="#000"/><rect x="3.5" y="0.5" width="9" height="9" fill="#b8b8b8" stroke="#000"/><path d="M12 4.5H17" stroke="#0000e0" stroke-width="2"/></svg>
<div class="m" style="left:288px;top:93px">Interface</div>
<div class="m" style="left:307px;top:109px">IN</div>
<div class="m" style="left:326px;top:125px">Mode</div>
<div class="m" style="left:326px;top:141px">Setting</div>
<div class="m" style="left:307px;top:157px">OUT</div>
<div class="m" style="left:307px;top:173px">IN_OUT</div>
<div class="m" style="left:307px;top:189px">TEMP</div>
<div class="m" style="left:326px;top:205px">Temp</div>
<div class="m" style="left:307px;top:221px">RETURN</div>
<!-- contents of + table -->
<div class="m" style="left:435px;top:74px">Contents Of: 'Environment\Interface\TEMP'</div>
<div class="a" style="left:435px;top:92px;width:918px;height:18px;background:#f0f0f0;border-bottom:1px solid #000;border-right:1px solid #000"></div>
<div class="a" style="left:454px;top:92px;width:1px;height:18px;background:#000"></div>
<div class="a" style="left:600px;top:92px;width:1px;height:54px;background:#000"></div>
<div class="a" style="left:680px;top:92px;width:1px;height:18px;background:#000"></div>
<div class="a" style="left:760px;top:92px;width:1px;height:18px;background:#000"></div>
<div class="mb" style="left:458px;top:93px">Name</div>
<div class="mb" style="left:605px;top:93px">Data Type</div>
<div class="mb" style="left:685px;top:93px">Address</div>
<div class="mb" style="left:765px;top:93px">Comment</div>
<div class="a" style="left:455px;top:110px;width:898px;height:18px;background:#3399ff"></div>
<div class="a" style="left:681px;top:128px;width:672px;height:18px;background:#e3e3e3"></div>
<div class="a" style="left:600px;top:110px;width:81px;height:18px;background:#fff;border:2px solid #000;border-right-width:1px;border-top-width:1px"></div>
<div class="a" style="left:665px;top:112px;width:15px;height:14px;background:#f0f0f0;border:1px solid;border-color:#fff #808080 #808080 #fff"></div>
<svg style="left:669px;top:117px" width="8" height="4" viewBox="0 0 8 4"><path d="M0 0h7l-3.5 4z" fill="#000"/></svg>
<div class="m" style="left:458px;top:108px;color:#e8f4ff">Temp</div>
<div class="m" style="left:603px;top:108px">Word</div>
<div class="m" style="left:685px;top:108px;color:#c8ffff">0.0</div>
<svg style="left:437px;top:113px" width="13" height="9" viewBox="0 0 13 9"><path d="M0 0.5l3 2" stroke="#000"/><rect x="2.5" y="1.5" width="9" height="6" fill="#fff" stroke="#000"/><path d="M6 3.5h4M6 5.5h4" stroke="#0000c0"/><path d="M3 8.5h9.5v-6" fill="none" stroke="#606060"/></svg>
<svg style="left:437px;top:131px" width="13" height="9" viewBox="0 0 13 9"><path d="M0 0.5l3 2" stroke="#000"/><rect x="2.5" y="1.5" width="9" height="6" fill="#fff" stroke="#000"/><path d="M3 8.5h9.5v-6" fill="none" stroke="#606060"/></svg>
<!-- code editor -->
<div class="a" style="left:245px;top:259px;width:1113px;height:2px;background:#6d6d6d"></div>
<div class="a" style="left:246px;top:261px;width:1095px;height:398px;background:#fff;border-left:2px solid #a0a0a0"></div>
<div class="m" style="left:261px;top:276px">FC100 : Title:</div>
<div class="a" style="left:261px;top:301px;width:566px;height:40px;background:#c0c0c0;border:1px solid #000"></div>
<div class="m" style="left:263px;top:302px">Comment:</div>
<div class="a" style="left:259px;top:347px;width:76px;height:18px;background:#008080;border:1px dashed #8cc"></div>
<div class="mb" style="left:260px;top:348px;color:#fff">Network 1</div>
<div class="m" style="left:333px;top:348px">: Title:</div>
<div class="a" style="left:261px;top:373px;width:566px;height:40px;background:#c0c0c0;border:1px solid #000"></div>
<div class="m" style="left:263px;top:374px">Comment:</div>
<div class="m" style="left:261px;top:420px">      L     #Setting                    <span style="color:#808000">#Setting</span>
      T     #Temp                       <span style="color:#808000">#Temp</span>
      L     P#272.0
      LAR1
      L     P#0.0
      LAR2
      OPN   "PIW"                       <span style="color:#808000">DB1</span>
      OPN   DI   101
      L     7
FOR:  T     MW   200
      L     DBW [AR1,P#0.0]
      L     10
      /I
      T     MW [AR1,P#0.0]
      L     MW [AR1,P#16.0]</div>
<div class="a" style="left:245px;top:659px;width:1113px;height:17px;background:#f0f0f0"></div>
<!-- v scrollbar -->
<div class="a" style="left:1341px;top:261px;width:17px;height:398px;background:linear-gradient(90deg,#e6e6e6,#f1f1f1 20%,#f1f1f1 80%,#e6e6e6)"></div>
<svg style="left:1346px;top:268px" width="8" height="5" viewBox="0 0 8 5"><path d="M0 4.5l4-4 4 4z" fill="#333"/></svg>
<div class="a" style="left:1341px;top:279px;width:15px;height:15px;border:1px solid #a7a7a7;border-radius:2px;background:linear-gradient(90deg,#f6f6f6 0,#ececec 50%,#dcdcdc 52%,#d0d0d0 100%)"></div>
<svg style="left:1346px;top:648px" width="8" height="5" viewBox="0 0 8 5"><path d="M0 0.5l4 4 4-4z" fill="#333"/></svg>
<!-- h scrollbar -->
<div class="a" style="left:245px;top:659px;width:1096px;height:16px;background:linear-gradient(#e6e6e6,#f1f1f1 20%,#f1f1f1 80%,#e6e6e6)"></div>
<svg style="left:251px;top:663px" width="5" height="8" viewBox="0 0 5 8"><path d="M4.5 0L0.5 4l4 4z" fill="#333"/></svg>
<div class="a" style="left:263px;top:659px;width:15px;height:15px;border:1px solid #a7a7a7;border-radius:2px;background:linear-gradient(#f6f6f6 0,#ececec 50%,#dcdcdc 52%,#d0d0d0 100%)"></div>
<svg style="left:1330px;top:663px" width="5" height="8" viewBox="0 0 5 8"><path d="M0.5 0l4 4-4 4z" fill="#333"/></svg>
<div class="a" style="left:1341px;top:659px;width:17px;height:17px;background:#f0f0f0"></div>

<!-- status tab bar -->
<div class="a" style="left:0;top:680px;width:1358px;height:2px;background:#8c8c8c"></div>
<div class="a" style="left:0;top:682px;width:1358px;height:3px;background:#fafafa"></div>
<div class="a" style="left:0;top:707px;width:1358px;height:1px;background:#a0a0a0"></div>
<div class="a" style="left:0;top:708px;width:1358px;height:2px;background:#f8f8f8"></div>
<svg style="left:0;top:684px" width="1358" height="24" viewBox="0 0 1358 24">
<rect x="12" y="2" width="1343" height="16" fill="#f0f0f0"/>
<path d="M180 2.5L184 17H263L267 2.5z" fill="#fff"/>
<path d="M12 2.5H1355" stroke="#6e6e6e" stroke-width="1.6"/>
<path d="M12 17.5H1355M1354.5 2V18" stroke="#a0a0a0" stroke-width="1"/>
<path d="M0 13.5H8.5V3" fill="none" stroke="#a0a0a0"/>
<path d="M1 5l6 6M7 5l-6 6" stroke="#000" stroke-width="1.8"/>
<path d="M8.5 15V24M0.5 17h4v5" fill="none" stroke="#b0b0b0"/>
<g fill="none" stroke="#9c9c9c" stroke-width="2"><rect x="13" y="3" width="17" height="14"/><rect x="31" y="3" width="17" height="14"/><rect x="49" y="3" width="17" height="14"/><rect x="67" y="3" width="17" height="14"/></g>
<g fill="#a4a4a4"><rect x="18" y="5" width="1.3" height="10"/><path d="M25 5v10l-5.5-5z"/><path d="M43 5v10l-5.5-5z"/><path d="M54 5v10l5.5-5z"/><path d="M72 5v10l5.5-5z"/><rect x="78.7" y="5" width="1.3" height="10"/></g>
<g fill="none" stroke="#000" stroke-width="1.1">
<path d="M86 3L92 17.5"/>
<path d="M176 17.5L180 3L184 17.5"/>
<path d="M263 17.5L267 3L271 17.5"/>
<path d="M454 17.5L458 3L462 17.5"/>
<path d="M621 17.5L625 3L629 17.5"/>
<path d="M733 17.5L737 3L741 17.5"/>
<path d="M876 17.5L880 3L884 17.5"/>
<path d="M1020 17.5L1026 3"/>
</g></svg>
<div class="st" style="left:110px">1: Error</div>
<div class="st" style="left:202px">2: Info</div>
<div class="st" style="left:304px">3: Cross-references</div>
<div class="st" style="left:494px">4: Address info.</div>
<div class="st" style="left:654px">5: Modify</div>
<div class="st" style="left:767px">6: Diagnostics</div>
<div class="st" style="left:912px">7: Comparison</div>
</body></html>
